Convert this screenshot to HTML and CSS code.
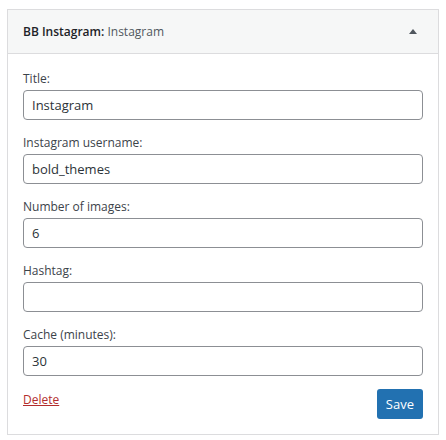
FILE: index.html
```html
<!DOCTYPE html>
<html lang="en">
<head>
    <meta charset="UTF-8">
    <meta name="viewport" content="width=device-width, initial-scale=1.0">
    <title>BB Instagram widget</title>
    <link rel="stylesheet" href="styles.css">
</head>
<body>
    <div class="widget">
        <div class="widget-top">
            <h3 class="widget-title">BB Instagram:<span class="in-title"> Instagram</span></h3>
            <span class="toggle-arrow"></span>
        </div>
        <form class="widget-inside">
            <div class="field">
                <label for="title">Title:</label>
                <input type="text" id="title" value="Instagram">
            </div>
            <div class="field">
                <label for="username">Instagram username:</label>
                <input type="text" id="username" value="bold_themes">
            </div>
            <div class="field">
                <label for="count">Number of images:</label>
                <input type="text" id="count" value="6">
            </div>
            <div class="field">
                <label for="hashtag">Hashtag:</label>
                <input type="text" id="hashtag" value="">
            </div>
            <div class="field">
                <label for="cache">Cache (minutes):</label>
                <input type="text" id="cache" value="30">
            </div>
            <div class="widget-control-actions">
                <a href="#" class="widget-delete">Delete</a>
                <button type="button" class="save-button">Save</button>
            </div>
        </form>
    </div>
</body>
</html>
```

FILE: styles.css
```css
body {
    margin: 0;
    padding: 9px 7px 0 7px;
    background-color: #fff;
    font-family: "Open Sans", "Noto Sans", sans-serif;
    font-size: 12px;
    color: #3c434a;
}
.widget {
    width: 430px;
    border: 1px solid #dcdcde;
    background-color: #fff;
}
.widget-top {
    display: flex;
    align-items: center;
    justify-content: space-between;
    height: 43px;
    padding: 0 21px 0 15px;
    background-color: #f6f7f7;
    border-bottom: 1px solid #dcdcde;
}
.widget-title {
    margin: 0;
    font-size: 12px;
    font-weight: 600;
    color: #1d2327;
}
.in-title {
    font-weight: 400;
    color: #50575e;
}
.toggle-arrow {
    width: 0;
    height: 0;
    border-left: 4px solid transparent;
    border-right: 4px solid transparent;
    border-bottom: 5px solid #50575e;
}
.widget-inside {
    padding: 15px 15px 15px 15px;
}
.field {
    display: flex;
    flex-direction: column;
    margin-bottom: 13px;
}
.field label {
    line-height: 19px;
    margin-bottom: 2px;
}
.field input {
    box-sizing: border-box;
    height: 30px;
    padding: 0 8px;
    border: 1px solid #8c8f94;
    border-radius: 4px;
    font-family: inherit;
    font-size: 13px;
    color: #2c3338;
    background-color: #fff;
}
.widget-control-actions {
    display: flex;
    justify-content: space-between;
    align-items: flex-start;
}
.widget-delete {
    color: #b32d2e;
    text-decoration: underline;
    line-height: 19px;
    margin-top: 1px;
}
.save-button {
    height: 30px;
    padding: 0 9px;
    border: none;
    border-radius: 3px;
    background-color: #2271b1;
    color: #fff;
    font-family: inherit;
    font-size: 13px;
    cursor: pointer;
}
```
